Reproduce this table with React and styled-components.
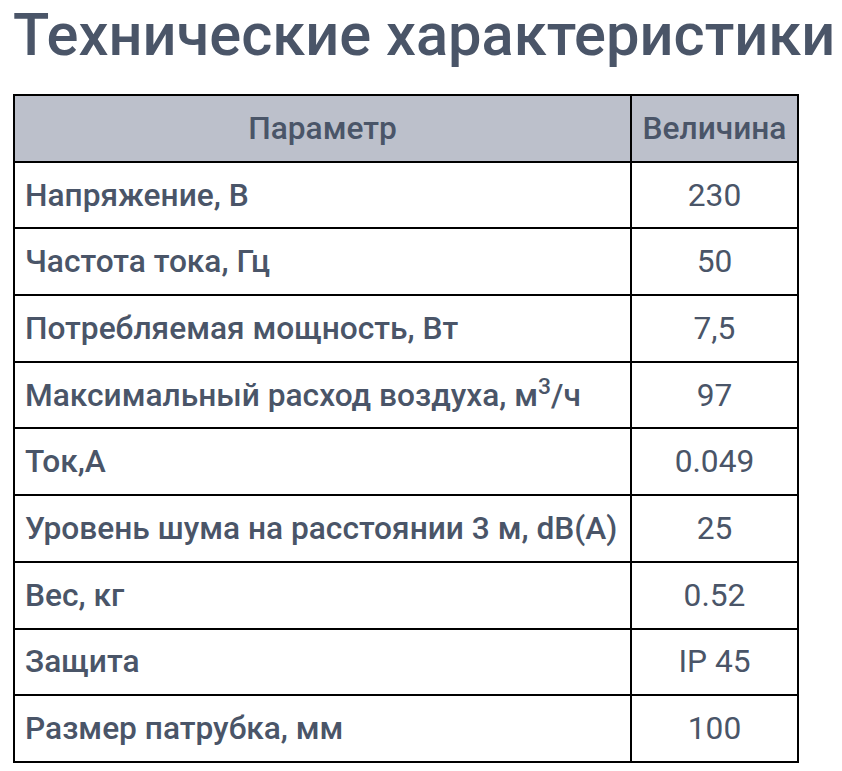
import React from 'react';
import styled, { createGlobalStyle } from 'styled-components';

const GlobalStyle = createGlobalStyle`
  body {
    margin: 0;
    background: #fff;
    font-family: Roboto, "Noto Sans", sans-serif;
    color: #475569;
  }
`;

const Page = styled.div`
  padding: 0 0 0 13px;
`;

const Title = styled.h2`
  margin: 0;
  font-size: 59.6px;
  line-height: 70px;
  font-weight: 500;
  color: #4a5568;
  white-space: nowrap;
`;

const SpecTable = styled.table`
  margin-top: 24px;
  border-collapse: collapse;
  table-layout: fixed;
  width: 784px;
  font-size: 31.7px;
`;

const Col = styled.col`
  width: ${(p) => p.$w};
`;

const HeadCell = styled.th`
  height: 64.7px;
  padding: 0 8px;
  background: #bcc0cb;
  border: 2px solid #000;
  font-weight: 500;
  text-align: center;
  color: #4a5568;
  white-space: nowrap;
`;

const Cell = styled.td`
  height: 64.7px;
  padding: 0 10px;
  border: 2px solid #000;
  font-weight: ${(p) => (p.$value ? 400 : 500)};
  text-align: ${(p) => (p.$value ? 'center' : 'left')};
  white-space: nowrap;
  color: #4a5568;
`;

const Sup = styled.sup`
  font-size: 0.72em;
  line-height: 0;
`;

const rows = [
  ['Напряжение, В', '230'],
  ['Частота тока, Гц', '50'],
  ['Потребляемая мощность, Вт', '7,5'],
  [<>Максимальный расход воздуха, м<Sup>3</Sup>/ч</>, '97'],
  ['Ток,А', '0.049'],
  ['Уровень шума на расстоянии 3 м, dB(A)', '25'],
  ['Вес, кг', '0.52'],
  ['Защита', 'IP 45'],
  ['Размер патрубка, мм', '100'],
];

export default function App() {
  return (
    <>
      <GlobalStyle />
      <Page>
        <Title>Технические характеристики</Title>
        <SpecTable>
          <colgroup>
            <Col $w="617px" />
            <Col $w="167px" />
          </colgroup>
          <thead>
            <tr>
              <HeadCell>Параметр</HeadCell>
              <HeadCell>Величина</HeadCell>
            </tr>
          </thead>
          <tbody>
            {rows.map((row, i) => (
              <tr key={i}>
                <Cell>{row[0]}</Cell>
                <Cell $value>{row[1]}</Cell>
              </tr>
            ))}
          </tbody>
        </SpecTable>
      </Page>
    </>
  );
}
